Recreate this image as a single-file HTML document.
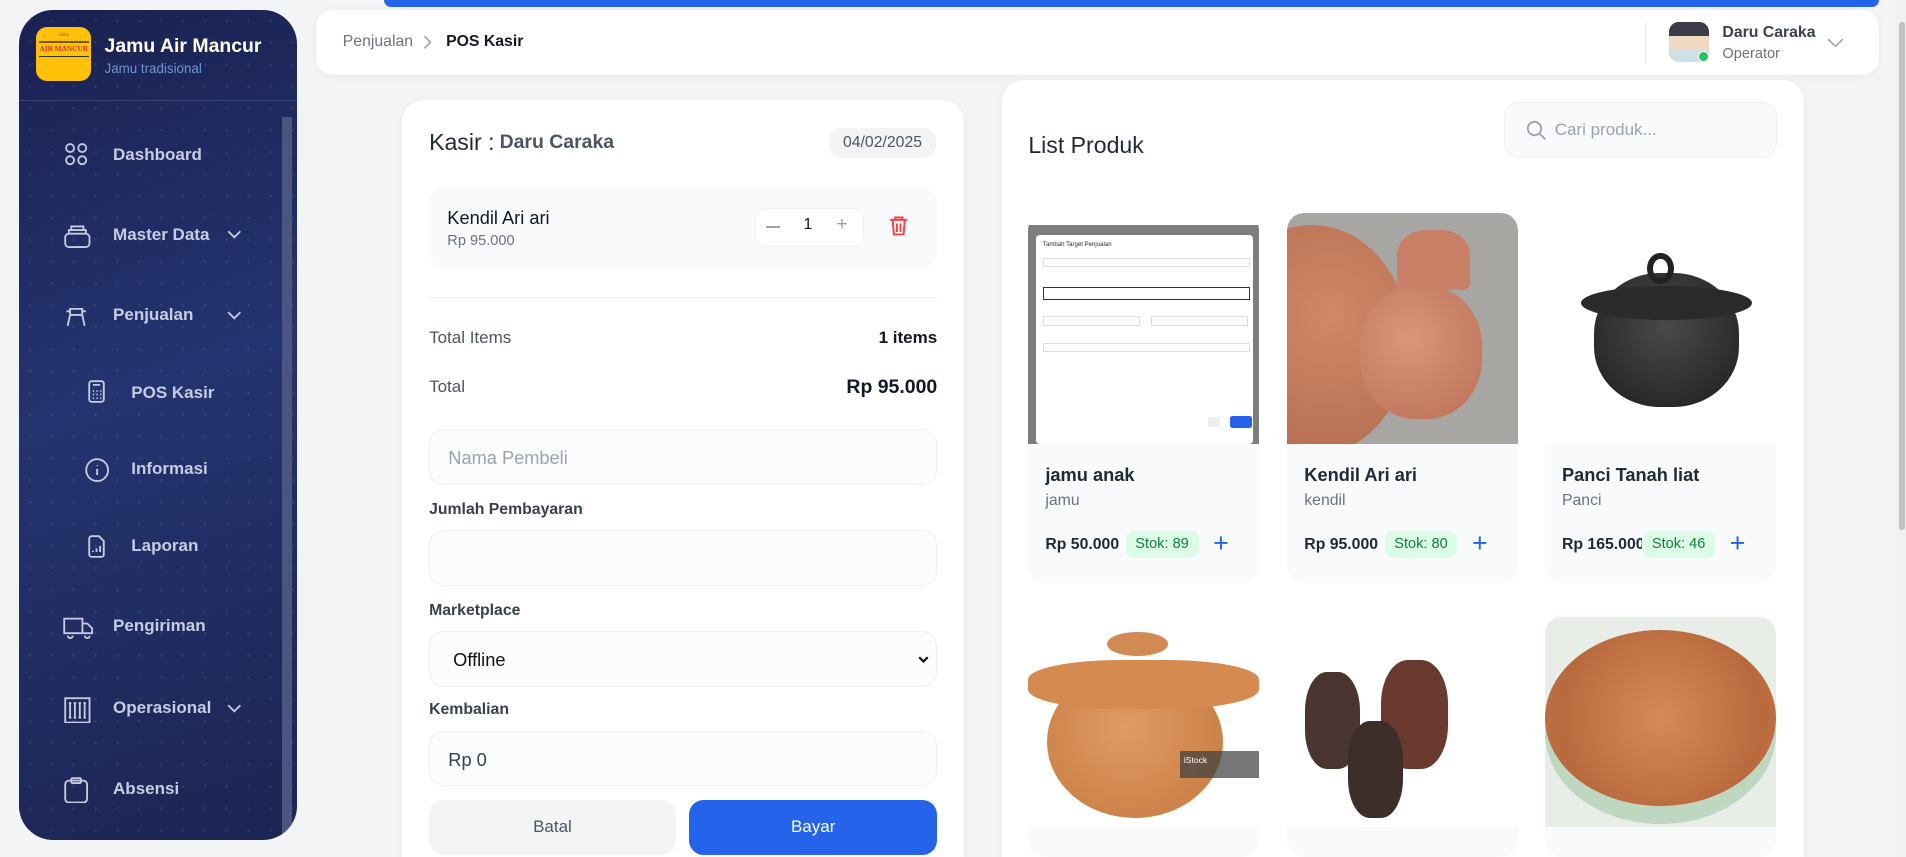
<!DOCTYPE html>
<html><head><meta charset="utf-8"><style>
*{box-sizing:border-box;margin:0;padding:0}
html,body{width:1906px;height:857px;overflow:hidden;background:#f3f4f6}
#w{position:absolute;left:0;top:0;width:1568px;height:705px;overflow:hidden;zoom:1.21556;font-family:"Liberation Sans",sans-serif;color:#1f2937;background:#f3f4f6}
.a{position:absolute}
.sb{left:16px;top:8px;width:228px;height:683px;border-radius:28px;background:linear-gradient(160deg,#1a2150 0%,#243470 45%,#1c2552 100%);overflow:hidden}
.sb:before{content:"";position:absolute;inset:0;background-image:radial-gradient(rgba(255,255,255,.08) 1px,transparent 1.2px);background-size:18px 18px}
.nav{position:absolute;color:#c7cce0;font-weight:bold;font-size:14px}
.ic{position:absolute;stroke:#c7cce0;fill:none;stroke-width:1.5}
.card{background:#fff;border-radius:18px 18px 0 0;box-shadow:0 1px 6px rgba(0,0,0,.05);overflow:hidden}
.inp{position:absolute;left:22px;width:418px;height:46px;border:1px solid #eef0f3;border-radius:12px;background:#fbfcfd;font-size:15px;padding:14px 15px}
.lbl{position:absolute;left:22px;font-size:13px;font-weight:bold;color:#374151}
.pc{position:absolute;width:190px;height:305px;border-radius:14px;background:#f8fafc;overflow:hidden}
.pc .img{position:absolute;left:0;top:0;width:190px;height:190px;background:#fff;overflow:hidden}
.pn{position:absolute;left:14px;top:207px;font-size:15px;font-weight:bold;color:#1f2937}
.pk{position:absolute;left:14px;top:230px;font-size:13px;color:#6b7280}
.pp{position:absolute;left:14px;top:266px;font-size:13px;font-weight:bold;color:#1f2937}
.st{position:absolute;top:262px;height:22px;border-radius:7px;background:#dcfce7;color:#15803d;font-size:12px;padding:4px 8px}
.pl{position:absolute;left:152px;top:261px;font-size:22px;color:#2563eb;line-height:22px}
</style></head><body><div id="w">
<div class="a sb">
 <div class="a" style="left:14px;top:14px;width:45px;height:45px;border-radius:9px;background:#ffc107;overflow:hidden">
  <div class="a" style="left:2px;top:12px;width:41px;height:1px;background:#7a5a00"></div>
  <div class="a" style="left:0;top:15px;width:45px;text-align:center;font:bold 6px 'Liberation Serif',serif;color:#d33">AIR MANCUR</div>
  <div class="a" style="left:2px;top:24px;width:41px;height:1px;background:#333"></div>
  <div class="a" style="left:0;top:5px;width:45px;text-align:center;font:4px serif;color:#c33">Jamu</div>
 </div>
 <div class="a" style="left:70px;top:21px;color:#fff;font-weight:bold;font-size:16px">Jamu Air Mancur</div>
 <div class="a" style="left:70px;top:42px;color:#6f95d4;font-size:11px">Jamu tradisional</div>
 <div class="a" style="left:0;top:74px;width:228px;height:1px;background:#3a4778"></div>
 <div class="a" style="left:216px;top:88px;width:8px;height:592px;background:#4a5580;border-radius:1px"></div>
 <svg class="ic" style="left:37px;top:109px" width="20" height="20" viewBox="0 0 20 20"><circle cx="5" cy="5" r="3.3"/><circle cx="15" cy="5" r="3.3"/><circle cx="5" cy="15" r="3.3"/><circle cx="15" cy="15" r="3.3"/></svg>
 <div class="nav" style="left:77px;top:111px">Dashboard</div>
 <svg class="ic" style="left:37px;top:176px" width="22" height="20" viewBox="0 0 22 20"><rect x="1" y="8" width="20" height="11" rx="3"/><path d="M4 8V5h14v3M6 5V2h10v3"/></svg>
 <div class="nav" style="left:77px;top:177px">Master Data</div>
 <svg class="ic" style="left:171px;top:181px" width="12" height="8" viewBox="0 0 12 8"><path d="M1 1l5 5 5-5"/></svg>
 <svg class="ic" style="left:37px;top:242px" width="20" height="20" viewBox="0 0 20 20"><path d="M3 18l2-9h10l2 9M5 9V4h10v5M2 6h3M15 6h3"/></svg>
 <div class="nav" style="left:77px;top:243px">Penjualan</div>
 <svg class="ic" style="left:171px;top:248px" width="12" height="8" viewBox="0 0 12 8"><path d="M1 1l5 5 5-5"/></svg>
 <svg class="ic" style="left:56px;top:305px" width="14" height="19" viewBox="0 0 14 19"><rect x="1" y="1" width="12" height="17" rx="2"/><path d="M4 4h6M4 9h1M7 9h1M10 9h1M4 12h1M7 12h1M10 12h1M4 15h1M7 15h1M10 15h1"/></svg>
 <div class="nav" style="left:92px;top:307px">POS Kasir</div>
 <svg class="ic" style="left:54px;top:369px" width="20" height="20" viewBox="0 0 20 20"><circle cx="10" cy="10" r="9"/><path d="M10 9v5M10 6v.5"/></svg>
 <div class="nav" style="left:92px;top:370px">Informasi</div>
 <svg class="ic" style="left:56px;top:432px" width="14" height="19" viewBox="0 0 14 19"><path d="M1 3a2 2 0 012-2h6l4 4v11a2 2 0 01-2 2H3a2 2 0 01-2-2z"/><path d="M4 14v-1M7 14v-3M10 14v-5"/></svg>
 <div class="nav" style="left:92px;top:433px">Laporan</div>
 <svg class="ic" style="left:36px;top:498px" width="25" height="20" viewBox="0 0 25 20"><path d="M1 3h15v12H1zM16 7h4l4 4v4h-8M4 17a2 2 0 104 0M18 17a2 2 0 104 0"/></svg>
 <div class="nav" style="left:77px;top:499px">Pengiriman</div>
 <svg class="ic" style="left:37px;top:565px" width="22" height="22" viewBox="0 0 22 22"><rect x="1" y="1" width="20" height="20"/><path d="M5 5v12M9 5v12M13 5v12M17 5v12M4 5h2M8 5h2M12 5h2M16 5h2M4 17h2M8 17h2M12 17h2M16 17h2"/></svg>
 <div class="nav" style="left:77px;top:566px">Operasional</div>
 <svg class="ic" style="left:171px;top:571px" width="12" height="8" viewBox="0 0 12 8"><path d="M1 1l5 5 5-5"/></svg>
 <svg class="ic" style="left:37px;top:631px" width="20" height="22" viewBox="0 0 20 22"><rect x="1" y="3" width="18" height="18" rx="3"/><rect x="6" y="1" width="8" height="4" rx="1"/></svg>
 <div class="nav" style="left:77px;top:633px">Absensi</div>
</div>
<div class="a" style="left:316px;top:0;width:1230px;height:6px;background:#2563eb;border-radius:0 0 6px 6px"></div>
<div class="a card" style="left:260px;top:8px;width:1286px;height:54px;border-radius:14px">
 <div class="a" style="left:22px;top:19px;font-size:13px;color:#6b7280">Penjualan</div>
 <svg class="a" style="left:87px;top:21px" width="8" height="12" viewBox="0 0 8 12"><path d="M2 1l5 5-5 5" stroke="#9ca3af" fill="none" stroke-width="1.3"/></svg>
 <div class="a" style="left:107px;top:19px;font-size:13px;color:#111827;font-weight:bold">POS Kasir</div>
 <div class="a" style="left:1093px;top:10px;width:1px;height:34px;background:#e5e7eb"></div>
 <div class="a" style="left:1113px;top:10px;width:33px;height:33px;border-radius:8px;background:linear-gradient(#3b3b4a 0 35%,#f1d8c0 35% 70%,#cfe0e6 70%)"></div>
 <div class="a" style="left:1137px;top:34px;width:9px;height:9px;border-radius:50%;background:#22c55e;border:1.5px solid #fff"></div>
 <div class="a" style="left:1157px;top:12px;font-size:13px;font-weight:bold;color:#374151">Daru Caraka</div>
 <div class="a" style="left:1157px;top:30px;font-size:12px;color:#6b7280">Operator</div>
 <svg class="a" style="left:1243px;top:23px" width="14" height="8" viewBox="0 0 14 8"><path d="M1 1l6 6 6-6" stroke="#9ca3af" fill="none" stroke-width="1.3"/></svg>
</div>
<div class="a card" style="left:331px;top:82px;width:462px;height:623px">
 <div class="a" style="left:22px;top:24px;font-size:19px;color:#1f2937">Kasir :</div>
 <div class="a" style="left:80px;top:26px;font-size:16px;font-weight:bold;color:#4b5563">Daru Caraka</div>
 <div class="a" style="left:351px;top:23px;width:88px;height:25px;border-radius:10px;background:#f3f4f6;font-size:13px;color:#4b5563;padding:5px 0;text-align:center">04/02/2025</div>
 <div class="a" style="left:22px;top:71px;width:418px;height:68px;border-radius:14px;background:#f8fafc">
  <div class="a" style="left:15px;top:17px;font-size:15px;color:#111827">Kendil Ari ari</div>
  <div class="a" style="left:15px;top:39px;font-size:12px;color:#6b7280">Rp 95.000</div>
  <div class="a" style="left:268px;top:18px;width:90px;height:32px;border-radius:9px;background:#fff;border:1px solid #f0f1f3"></div>
  <div class="a" style="left:277px;top:33px;width:12px;height:1.5px;background:#9ca3af"></div>
  <div class="a" style="left:308px;top:25px;font-size:13px;color:#111827">1</div>
  <div class="a" style="left:335px;top:22px;font-size:16px;color:#9ca3af">+</div>
  <svg class="a" style="left:378px;top:24px" width="16" height="18" viewBox="0 0 16 18"><path d="M1 4h14M5 4V2h6v2M3 4l1 12h8l1-12M6.5 7v7M9.5 7v7" stroke="#ef4444" fill="none" stroke-width="1.6"/></svg>
 </div>
 <div class="a" style="left:22px;top:162px;width:418px;height:1px;background:#eef0f2"></div>
 <div class="a" style="left:22px;top:188px;font-size:14px;color:#4b5563">Total Items</div>
 <div class="a" style="right:22px;top:188px;font-size:14px;font-weight:bold;color:#111827">1 items</div>
 <div class="a" style="left:22px;top:228px;font-size:14px;color:#4b5563">Total</div>
 <div class="a" style="right:22px;top:227px;font-size:16px;font-weight:bold;color:#111827">Rp 95.000</div>
 <div class="inp" style="top:271px;color:#9ca3af">Nama Pembeli</div>
 <div class="lbl" style="top:330px">Jumlah Pembayaran</div>
 <div class="inp" style="top:354px"></div>
 <div class="lbl" style="top:413px">Marketplace</div>
 <div class="inp" style="top:437px;color:#111;padding-left:19px">Offline<svg class="a" style="right:6px;top:20px" width="9" height="6" viewBox="0 0 9 6"><path d="M1 1l3.5 3.5L8 1" stroke="#111" fill="none" stroke-width="1.8"/></svg></div>
 <div class="lbl" style="top:495px">Kembalian</div>
 <div class="inp" style="top:519px;color:#374151">Rp 0</div>
 <div class="a" style="left:22px;top:576px;width:203px;height:45px;border-radius:12px;background:#f3f4f6;text-align:center;padding-top:14px;font-size:14px;color:#4b5563">Batal</div>
 <div class="a" style="left:236px;top:576px;width:204px;height:45px;border-radius:12px;background:#2563eb;text-align:center;padding-top:14px;font-size:14px;color:#fff">Bayar</div>
</div>
<div class="a card" style="left:824px;top:66px;width:660px;height:639px">
 <div class="a" style="left:22px;top:43px;font-size:19px;color:#1f2937">List Produk</div>
 <div class="a" style="left:413px;top:18px;width:225px;height:46px;border-radius:12px;border:1px solid #eef0f3;background:#f9fafb"></div>
 <svg class="a" style="left:431px;top:33px" width="17" height="17" viewBox="0 0 17 17"><circle cx="7" cy="7" r="5.5" stroke="#9ca3af" fill="none" stroke-width="1.5"/><path d="M11 11l5 5" stroke="#9ca3af" stroke-width="1.5"/></svg>
 <div class="a" style="left:455px;top:33px;font-size:14px;color:#9ca3af">Cari produk...</div>

 <div class="pc" style="left:22px;top:109px"><div class="img">
  <div class="a" style="left:0;top:10px;width:190px;height:180px;background:#7d7d7d"></div>
  <div class="a" style="left:6px;top:18px;width:179px;height:172px;background:#fff;border-radius:3px"></div>
  <div class="a" style="left:12px;top:24px;font-size:5px">Tambah Target Penjualan</div>
  <div class="a" style="left:12px;top:37px;width:170px;height:8px;border:1px solid #ddd"></div>
  <div class="a" style="left:12px;top:61px;width:170px;height:11px;border:1px solid #333"></div>
  <div class="a" style="left:12px;top:85px;width:80px;height:8px;border:1px solid #ddd"></div>
  <div class="a" style="left:101px;top:85px;width:80px;height:8px;border:1px solid #ddd"></div>
  <div class="a" style="left:12px;top:107px;width:170px;height:8px;border:1px solid #ddd"></div>
  <div class="a" style="left:148px;top:168px;width:10px;height:8px;background:#eee"></div>
  <div class="a" style="left:166px;top:167px;width:18px;height:10px;background:#2563eb;border-radius:2px"></div>
 </div>
  <div class="pn">jamu anak</div><div class="pk">jamu</div><div class="pp">Rp 50.000</div><div class="st" style="left:80px">Stok: 89</div><div class="pl">+</div></div>

 <div class="pc" style="left:235px;top:109px"><div class="img" style="background:#a8a6a2;border-radius:14px 14px 0 0">
  <div class="a" style="left:-60px;top:10px;width:160px;height:190px;border-radius:50%;background:radial-gradient(circle at 60% 40%,#d08868,#b0684c)"></div>
  <div class="a" style="left:60px;top:60px;width:100px;height:110px;border-radius:45%;background:radial-gradient(circle at 40% 40%,#d9957a,#bb7058)"></div>
  <div class="a" style="left:90px;top:14px;width:60px;height:50px;border-radius:40% 40% 10% 10%;background:#c98066"></div>
 </div>
  <div class="pn">Kendil Ari ari</div><div class="pk">kendil</div><div class="pp">Rp 95.000</div><div class="st" style="left:80px">Stok: 80</div><div class="pl">+</div></div>

 <div class="pc" style="left:447px;top:109px"><div class="img">
  <div class="a" style="left:40px;top:50px;width:120px;height:110px;border-radius:45%;background:radial-gradient(circle at 50% 40%,#4a4a4a,#1d1d1d)"></div>
  <div class="a" style="left:30px;top:60px;width:140px;height:28px;border-radius:50%;background:#2a2a2a"></div>
  <div class="a" style="left:84px;top:33px;width:22px;height:26px;border-radius:50%;border:5px solid #222"></div>
 </div>
  <div class="pn">Panci Tanah liat</div><div class="pk">Panci</div><div class="pp">Rp 165.000</div><div class="st" style="left:80px">Stok: 46</div><div class="pl">+</div></div>

 <div class="pc" style="left:22px;top:442px;height:197px"><div class="img" style="height:172px">
  <div class="a" style="left:15px;top:40px;width:145px;height:125px;border-radius:50%;background:radial-gradient(circle at 45% 40%,#e09a62,#c47a40)"></div>
  <div class="a" style="left:0;top:35px;width:190px;height:40px;border-radius:40%;background:#d58a50"></div>
  <div class="a" style="left:65px;top:12px;width:50px;height:20px;border-radius:50%;background:#d28a55"></div>
  <div class="a" style="left:125px;top:110px;width:65px;height:22px;background:rgba(60,60,60,.7);color:#fff;font-size:7px;padding:3px">iStock</div>
 </div></div>

 <div class="pc" style="left:235px;top:442px;height:197px"><div class="img" style="height:172px">
  <div class="a" style="left:15px;top:45px;width:45px;height:80px;border-radius:40%;background:#4a3530"></div>
  <div class="a" style="left:77px;top:35px;width:55px;height:90px;border-radius:40%;background:#6a3a2e"></div>
  <div class="a" style="left:50px;top:85px;width:45px;height:80px;border-radius:40%;background:#3e2e2a"></div>
 </div></div>

 <div class="pc" style="left:447px;top:442px;height:197px"><div class="img" style="height:172px;background:#e8ede8">
  <div class="a" style="left:0;top:20px;width:190px;height:150px;border-radius:50%;background:#bdd7c0"></div>
  <div class="a" style="left:0;top:10px;width:190px;height:145px;border-radius:50%;background:radial-gradient(circle at 50% 50%,#d8895a,#b86a3e 70%,#c87848)"></div>
 </div></div>
</div>
<div class="a" style="left:1560px;top:0;width:8px;height:705px;background:#f1f1f1"></div>
<div class="a" style="left:1562px;top:18px;width:5px;height:418px;background:#c1c1c1;border-radius:2px"></div>
</div></body></html>
